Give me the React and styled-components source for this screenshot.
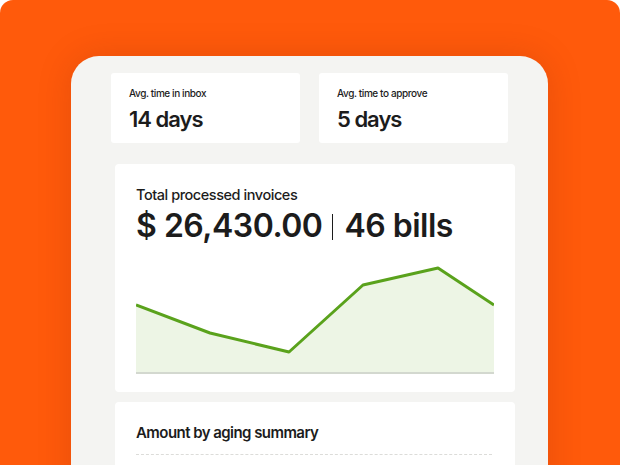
import React from "react";
import styled, { createGlobalStyle } from "styled-components";

const Global = createGlobalStyle`
  html, body { margin: 0; padding: 0; background: #ffffff; }
  body { font-family: Inter, "Noto Sans", "Liberation Sans", sans-serif; color: #1c1c1c; }
`;

const Backdrop = styled.div`
  width: 620px;
  height: 465px;
  background: #ff5a0b;
  border-radius: 13px 13px 0 0;
  overflow: hidden;
  padding: 56px 0 0 71px;
  box-sizing: border-box;
`;

const Panel = styled.div`
  width: 477px;
  height: 440px;
  background: #f4f4f2;
  border-radius: 28px 28px 0 0;
  box-shadow: 0 0 34px rgba(120, 30, 0, 0.18);
  padding-top: 17px;
  box-sizing: border-box;
  display: flex;
  flex-direction: column;
`;

const StatRow = styled.div`
  display: grid;
  grid-template-columns: 189px 189px;
  gap: 19px;
  padding-left: 40px;
`;

const StatCard = styled.div`
  background: #ffffff;
  height: 70px;
  border-radius: 3px;
  padding: 14px 0 0 18px;
  box-sizing: border-box;
`;

const StatLabel = styled.div`
  font-size: 10px;
  line-height: 12px;
  font-weight: 500;
  letter-spacing: -0.4px;
`;

const StatValue = styled.div`
  margin-top: 7px;
  font-size: 22px;
  line-height: 26px;
  font-weight: 600;
  letter-spacing: -1px;
`;

const Stack = styled.div`
  display: flex;
  flex-direction: column;
  gap: 10px;
  margin: 21px 0 0 44px;
  width: 400px;
`;

const Card = styled.div`
  background: #ffffff;
  border-radius: 4px;
  padding: ${(p) => p.$pad || "22px 21px 16px"};
`;

const CardTitle = styled.div`
  font-size: ${(p) => p.$size || 14}px;
  line-height: 17px;
  font-weight: ${(p) => p.$weight || 500};
  letter-spacing: ${(p) => p.$track || "-0.2px"};
`;

const BigNumber = styled.div`
  margin-top: 4px;
  display: flex;
  align-items: center;
  font-size: 32px;
  line-height: 38px;
  font-weight: 600;
  letter-spacing: -0.5px;
`;

const Divider = styled.span`
  display: inline-block;
  width: 1px;
  height: 26px;
  background: #1c1c1c;
  margin: 2px 11px 0 10px;
`;

const Chart = styled.svg`
  display: block;
  margin-top: 15px;
`;

const Dashed = styled.div`
  margin-top: 13px;
  border-top: 1px dashed #dcdcd9;
  width: 356px;
`;

const points = [
  [0, 45],
  [74, 73],
  [153, 92],
  [227, 25],
  [302, 8],
  [358, 45],
];

export default function App() {
  const line = points.map((p) => p.join(",")).join(" ");
  const area = `0,112 ${line} 358,112`;
  return (
    <>
      <Global />
      <Backdrop>
        <Panel>
          <StatRow>
            <StatCard>
              <StatLabel>Avg. time in inbox</StatLabel>
              <StatValue>14 days</StatValue>
            </StatCard>
            <StatCard>
              <StatLabel>Avg. time to approve</StatLabel>
              <StatValue>5 days</StatValue>
            </StatCard>
          </StatRow>
          <Stack>
            <Card>
              <CardTitle $size={14.5} $track="-0.45px">
                Total processed invoices
              </CardTitle>
              <BigNumber>
                $ 26,430.00
                <Divider />
                46 bills
              </BigNumber>
              <Chart width="358" height="116" viewBox="0 0 358 116">
                <polygon points={area} fill="#edf5e5" />
                <rect x="0" y="112" width="358" height="2" fill="#d3d8cf" />
                <polyline
                  points={line}
                  fill="none"
                  stroke="#5aa21c"
                  strokeWidth="3"
                  strokeLinejoin="round"
                />
              </Chart>
            </Card>
            <Card $pad="22px 21px 40px">
              <CardTitle $size={15} $weight={600} $track="-0.55px">
                Amount by aging summary
              </CardTitle>
              <Dashed />
            </Card>
          </Stack>
        </Panel>
      </Backdrop>
    </>
  );
}
